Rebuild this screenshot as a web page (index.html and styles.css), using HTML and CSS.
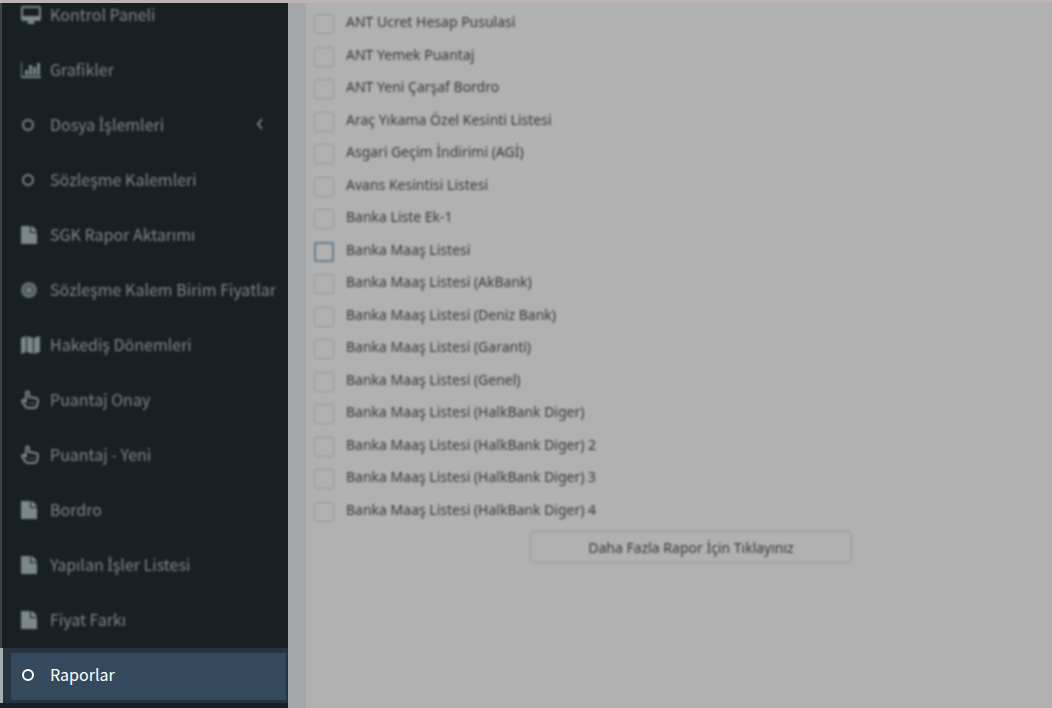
FILE: index.html
```html
<!DOCTYPE html>
<html lang="tr">
<head>
  <meta charset="UTF-8" />
  <meta name="viewport" content="width=device-width, initial-scale=1.0"/>
  <title>Raporlar</title>
  <link rel="stylesheet" href="styles.css">
</head>
<body>
  <!-- Shared icons -->
  <svg class="icon-defs" aria-hidden="true">
    <symbol id="icon-desktop" viewBox="0 0 20 20">
      <path fill-rule="evenodd" d="M2 1h16a2 2 0 0 1 2 2v11a2 2 0 0 1-2 2h-5v2h1v1H6v-1h1v-2H2a2 2 0 0 1-2-2V3a2 2 0 0 1 2-2zm0 2v8h16V3z"/>
    </symbol>
    <symbol id="icon-chart" viewBox="0 0 20 20">
      <path d="M0 2h1v14h19v2H0zM4 10h3v5H4zM8 5h3v10H8zM12 7h3v8h-3zM16 3h3v12h-3z"/>
    </symbol>
    <symbol id="icon-circle" viewBox="0 0 20 20">
      <circle cx="7" cy="10" r="5" fill="none" stroke="currentColor" stroke-width="2"/>
    </symbol>
    <symbol id="icon-file" viewBox="0 0 20 20">
      <path d="M0 1h9v7h7v11H0zM10 1c2 0 6 4 6 6h-6z"/>
    </symbol>
    <symbol id="icon-disc" viewBox="0 0 20 20">
      <circle cx="8" cy="10" r="8" opacity="0.75"/>
      <circle cx="8" cy="10" r="4" fill="none" stroke="#192023" opacity="0.5"/>
      <circle cx="8" cy="10" r="2"/>
    </symbol>
    <symbol id="icon-map" viewBox="0 0 20 20">
      <path d="M0 3l5-2v16l-5 2zM6 1l6 2v16l-6-2zM13 3l6-2v16l-6 2z"/>
    </symbol>
    <symbol id="icon-hand" viewBox="0 0 20 20">
      <path fill="none" stroke="currentColor" stroke-width="2" stroke-linejoin="round" stroke-linecap="round" d="M5 10V3c0-2 3-2 3 0v4l6 1c2 0 3 1 3 3 0 2-1 3-1 5-1 2-2 2-3 2H7c-2 0-3-2-5-5-2-2 0-4 1-3l2 2"/>
      <path fill="none" stroke="currentColor" opacity="0.5" d="M9 12v3M11 12v3M13 12v3"/>
    </symbol>
  </svg>

  <div class="topbar"></div>

  <div class="layout">
    <nav class="sidebar">
      <ul class="menu">
        <li><a href="#"><svg class="icon"><use href="#icon-desktop"/></svg>Kontrol Paneli</a></li>
        <li><a href="#"><svg class="icon"><use href="#icon-chart"/></svg>Grafikler</a></li>
        <li>
          <a href="#"><svg class="icon"><use href="#icon-circle"/></svg><span>Dosya <span class="ext">İş</span>lemleri</span>
            <svg class="arrow" viewBox="0 0 8 12"><path d="M6 1L2 6l4 5"/></svg>
          </a>
        </li>
        <li><a href="#"><svg class="icon"><use href="#icon-circle"/></svg>Sözleşme Kalemleri</a></li>
        <li><a href="#"><svg class="icon"><use href="#icon-file"/></svg>SGK Rapor Aktarımı</a></li>
        <li><a href="#"><svg class="icon"><use href="#icon-disc"/></svg>Sözleşme Kalem Birim Fiyatlar</a></li>
        <li><a href="#"><svg class="icon"><use href="#icon-map"/></svg>Hakediş Dönemleri</a></li>
        <li><a href="#"><svg class="icon"><use href="#icon-hand"/></svg>Puantaj Onay</a></li>
        <li><a href="#"><svg class="icon"><use href="#icon-hand"/></svg>Puantaj - Yeni</a></li>
        <li><a href="#"><svg class="icon"><use href="#icon-file"/></svg>Bordro</a></li>
        <li><a href="#"><svg class="icon"><use href="#icon-file"/></svg><span>Yapılan <span class="ext">İş</span>ler Listesi</span></a></li>
        <li><a href="#"><svg class="icon"><use href="#icon-file"/></svg>Fiyat Farkı</a></li>
        <li class="active"><a href="#"><svg class="icon"><use href="#icon-circle"/></svg>Raporlar</a></li>
      </ul>
    </nav>

    <main class="content">
      <form class="report-form">
        <label class="report"><input type="checkbox"><span>ANT Ucret Hesap Pusulasi</span></label>
        <label class="report"><input type="checkbox"><span>ANT Yemek Puantaj</span></label>
        <label class="report"><input type="checkbox"><span>ANT Yeni Çarşaf Bordro</span></label>
        <label class="report"><input type="checkbox"><span>Araç Yıkama Özel Kesinti Listesi</span></label>
        <label class="report"><input type="checkbox"><span>Asgari Geçim İndirimi (AGİ)</span></label>
        <label class="report"><input type="checkbox"><span>Avans Kesintisi Listesi</span></label>
        <label class="report"><input type="checkbox"><span>Banka Liste Ek-1</span></label>
        <label class="report selected"><input type="checkbox"><span>Banka Maaş Listesi</span></label>
        <label class="report"><input type="checkbox"><span>Banka Maaş Listesi (AkBank)</span></label>
        <label class="report"><input type="checkbox"><span>Banka Maaş Listesi (Deniz Bank)</span></label>
        <label class="report"><input type="checkbox"><span>Banka Maaş Listesi (Garanti)</span></label>
        <label class="report"><input type="checkbox"><span>Banka Maaş Listesi (Genel)</span></label>
        <label class="report"><input type="checkbox"><span>Banka Maaş Listesi (HalkBank Diger)</span></label>
        <label class="report"><input type="checkbox"><span>Banka Maaş Listesi (HalkBank Diger) 2</span></label>
        <label class="report"><input type="checkbox"><span>Banka Maaş Listesi (HalkBank Diger) 3</span></label>
        <label class="report"><input type="checkbox"><span>Banka Maaş Listesi (HalkBank Diger) 4</span></label>
        <div class="more">
          <button type="button" class="more-btn">Daha Fazla Rapor İçin Tıklayınız</button>
        </div>
      </form>
    </main>
  </div>
</body>
</html>
```
FILE: styles.css
```css
* {
  box-sizing: border-box;
}
body {
  margin: 0;
  min-height: 100vh;
  display: flex;
  flex-direction: column;
  background: #b1b1b1;
  font-family: "Noto Sans", "Open Sans", sans-serif;
  color: #38393b;
}
.icon-defs {
  display: none;
}
.topbar {
  height: 3px;
  background: #bab5b4;
}
.layout {
  flex: 1;
  display: flex;
}

/* Sidebar */
.sidebar {
  width: 288px;
  flex-shrink: 0;
  overflow: hidden;
  background: #192023;
}
.menu {
  list-style: none;
  margin: -15px 0 0;
  padding: 0;
  font-family: "Noto Sans CJK SC", "Noto Sans", sans-serif;
  font-size: 16px;
  font-weight: 400;
}
.menu li {
  height: 55px;
  padding: 5px 2px 3px 8px;
  border-left: 2px solid #3f4548;
}
.menu a {
  height: 100%;
  display: flex;
  align-items: center;
  padding: 0 22px 5px 11px;
  color: #7a878d;
  text-decoration: none;
  white-space: nowrap;
  filter: blur(1px);
}
/* the CJK face has no dotted capital I */
.ext {
  font-family: "Noto Sans", sans-serif;
  line-height: 1;
}
.icon {
  width: 20px;
  height: 20px;
  margin: 1px 9px 0 0;
  flex-shrink: 0;
  fill: currentColor;
}
.arrow {
  width: 8px;
  height: 12px;
  margin-left: auto;
  fill: none;
  stroke: currentColor;
  stroke-width: 2;
}
.menu .active {
  border-left: 3px solid #a5adae;
  background: #263340;
}
.menu .active a {
  padding-left: 10px;
  background: #35495d;
  color: #fff;
  filter: none;
}

/* Report list */
.content {
  flex: 1;
  border-left: 18px solid #a3a7aa;
  padding: 2px 0 16px 8px;
}
.report-form {
  filter: blur(1px);
}
.report {
  display: flex;
  align-items: flex-start;
  gap: 12px;
  padding: 6px 0 4px;
  font-size: 15px;
  line-height: 1.5em;
}
.report span {
  font-size: 14px;
}
.report input {
  appearance: none;
  width: 20px;
  height: 20px;
  margin: 3px 0 -1px;
  border: 1px solid #989898;
  border-radius: 3px;
}
.report.selected input {
  border: 2px solid #667d91;
}
.more {
  display: flex;
  justify-content: center;
  margin: 6px 0 0 16px;
}
.more-btn {
  min-width: 322px;
  height: 32px;
  border: 1px solid #989898;
  border-radius: 4px;
  background: none;
  color: inherit;
  font-family: inherit;
  font-size: 14px;
}
```
